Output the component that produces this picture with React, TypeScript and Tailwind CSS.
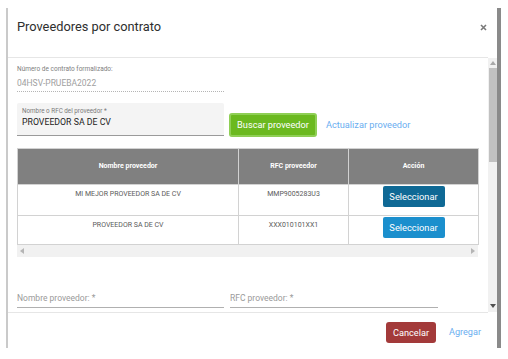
import React from "react";

interface Proveedor {
  nombre: string;
  rfc: string;
  active?: boolean;
}

const PROVEEDORES: Proveedor[] = [
  { nombre: "MI MEJOR PROVEEDOR SA DE CV", rfc: "MMP9005283U3", active: true },
  { nombre: "PROVEEDOR SA DE CV", rfc: "XXX010101XX1" },
];

function Arrow({ dir, className }: { dir: "up" | "down" | "left" | "right"; className: string }) {
  const points = {
    up: "0,4 3,0 6,4",
    down: "0,0 6,0 3,4",
    left: "4,0 4,6 0,3",
    right: "0,0 0,6 4,3",
  }[dir];
  const vertical = dir === "up" || dir === "down";
  return (
    <svg width={vertical ? 6 : 4} height={vertical ? 4 : 6} viewBox={vertical ? "0 0 6 4" : "0 0 4 6"} className={className}>
      <polygon points={points} fill="currentColor" />
    </svg>
  );
}

export default function App() {
  return (
    <div className="w-[508px] h-[359px] bg-white pt-[8px] pl-[6px] overflow-hidden" style={{ fontFamily: "Roboto, 'Liberation Sans', sans-serif" }}>
      <div className="w-[495px] h-[340px] flex flex-col border-l-2 border-l-[#cacaca] border-r-4 border-r-[#8a8a8a] bg-white">
        {/* Header */}
        <div className="w-[480px] h-[50px] shrink-0 flex justify-between border-b border-[#e6e6e6] pl-[9px] pr-[1px] pt-[11px]">
          <h2 className="text-[12.8px] leading-[16px] font-normal text-[#2e2e2e]">Proveedores por contrato</h2>
          <svg width="7" height="7" viewBox="0 0 7 7" className="mt-[5px] text-[#7a7a7a]">
            <path d="M1 1L6 6M6 1L1 6" stroke="currentColor" strokeWidth="1.6" />
          </svg>
        </div>

        {/* Body */}
        <div className="flex h-[254px] shrink-0">
          <div className="w-[480px] overflow-hidden pl-[9px] pr-[10px] pt-[7px]">
            <div className="w-[207px]">
              <div className="text-[6.5px] leading-[9px] text-[#808080]">Número de contrato formalizado:</div>
              <div className="mt-[3px] pb-[1px] text-[8.5px] leading-[13px] text-[#a0a0a0] border-b border-dotted border-[#b5b5b5]">04HSV-PRUEBA2022</div>
            </div>

            <div className="mt-[11px] flex items-end">
              <div className="w-[207px] h-[33px] bg-[#f4f4f4] border-b border-[#9a9a9a] rounded-t-[2px] px-[5px] pt-[4px]">
                <div className="text-[6.3px] leading-[9px] text-[#7a7a7a]">Nombre o RFC del proveedor *</div>
                <div className="text-[8.75px] leading-[13px] text-[#222]">PROVEEDOR SA DE CV</div>
              </div>
              <button className="ml-[5px] mb-[-1px] h-[24px] w-[88px] rounded-[3px] bg-[#6bb91f] border-2 border-[#8fcf55] text-white text-[9.2px] leading-[12px]">
                Buscar proveedor
              </button>
              <span className="ml-[9px] mb-[5px] text-[9.2px] leading-[12px] text-[#6aaef0]">Actualizar proveedor</span>
            </div>

            {/* Table */}
            <div className="mt-[12px] w-[461px]">
              <table className="w-[461px] border-collapse table-fixed">
                <colgroup>
                  <col className="w-[221px]" />
                  <col className="w-[110px]" />
                  <col className="w-[130px]" />
                </colgroup>
                <thead>
                  <tr className="h-[36px] bg-[#808080]">
                    <th className="border border-[#d2d2d2] text-white text-[7px] font-bold">Nombre proveedor</th>
                    <th className="border border-[#d2d2d2] text-white text-[7px] font-bold">RFC proveedor</th>
                    <th className="border border-[#d2d2d2] text-white text-[7px] font-bold">Acción</th>
                  </tr>
                </thead>
                <tbody>
                  {PROVEEDORES.map((p, i) => (
                    <tr key={p.rfc} className={i === 0 ? "h-[31px]" : "h-[29px]"}>
                      <td className="border border-[#d2d2d2] align-top pt-[4px] text-center text-[7px] leading-[10px] text-[#5a5a5a]">{p.nombre}</td>
                      <td className="border border-[#d2d2d2] align-top pt-[4px] text-center text-[7px] leading-[10px] text-[#5a5a5a]">{p.rfc}</td>
                      <td className="border border-[#d2d2d2] align-top pt-[1px] pb-0">
                        <button
                          className={`block mx-auto h-[21px] w-[62px] rounded-[2px] text-white text-[9.3px] leading-[12px] ${
                            p.active ? "bg-[#0f6995]" : "bg-[#1b8fcd]"
                          }`}
                        >
                          Seleccionar
                        </button>
                      </td>
                    </tr>
                  ))}
                </tbody>
              </table>
              <div className="h-[12px] bg-[#f1f1f1] flex items-center justify-between px-[3px]">
                <Arrow dir="left" className="text-[#b5b5b5]" />
                <Arrow dir="right" className="text-[#b5b5b5]" />
              </div>
            </div>

            <div className="mt-[35px] flex gap-[6px]">
              <div className="w-[207px] border-b border-[#b0b0b0] pb-[3px] text-[8.5px] leading-[12px] text-[#9a9a9a]">Nombre proveedor: *</div>
              <div className="w-[208px] border-b border-[#b0b0b0] pb-[3px] text-[8.5px] leading-[12px] text-[#9a9a9a]">RFC proveedor: *</div>
            </div>
          </div>

          {/* Vertical scrollbar */}
          <div className="w-[9px] bg-[#f1f1f1] flex flex-col items-center">
            <div className="h-[10px] flex items-center justify-center">
              <Arrow dir="up" className="text-[#a8a8a8]" />
            </div>
            <div className="w-[8px] h-[94px] bg-[#c1c1c1]" />
            <div className="flex-1" />
            <div className="h-[12px] flex items-center justify-center">
              <Arrow dir="down" className="text-[#505050]" />
            </div>
          </div>
        </div>

        {/* Footer */}
        <div className="w-[480px] flex-1 border-t border-[#e6e6e6] flex items-start justify-end pt-[9px] pr-[7px]">
          <button className="h-[21px] w-[50px] rounded-[3px] bg-[#a33a3a] text-white text-[9.2px] leading-[12px]">Cancelar</button>
          <span className="ml-[13px] mt-[4px] text-[9.1px] leading-[12px] text-[#6aaef0]">Agregar</span>
        </div>
      </div>
    </div>
  );
}
